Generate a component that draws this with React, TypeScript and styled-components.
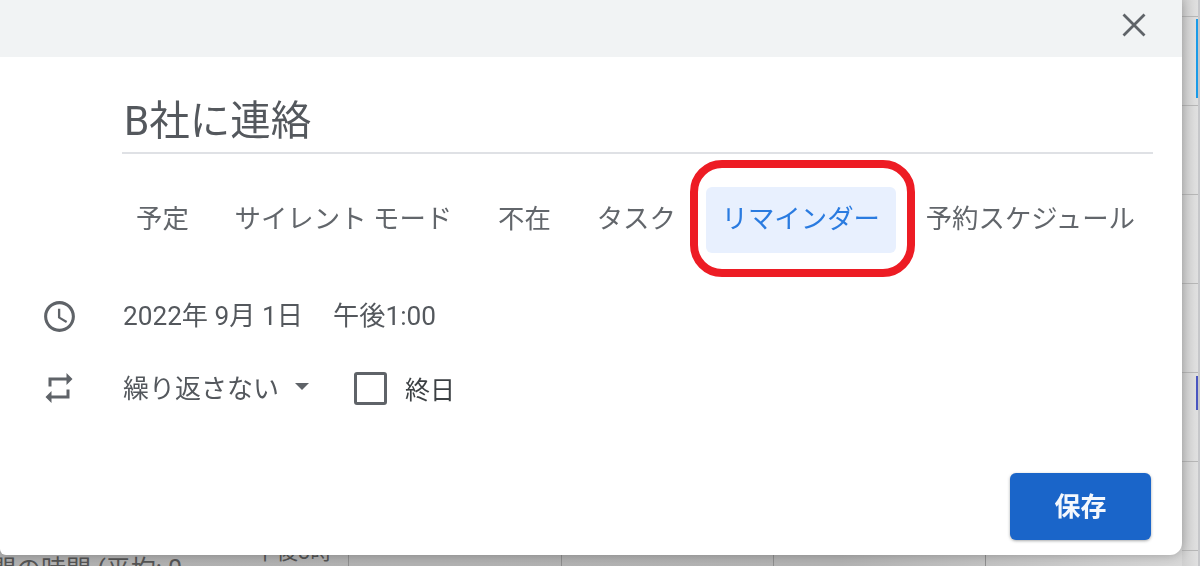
import React from "react";
import styled, { createGlobalStyle } from "styled-components";

const Global = createGlobalStyle`
  html, body { margin: 0; padding: 0; background: #dcdcdc; }
  body { font-family: Roboto, "Noto Sans CJK JP", sans-serif; }
`;

const Scene = styled.div`
  position: relative;
  width: 1200px;
  height: 566px;
  overflow: hidden;
`;

const Backdrop = styled.div`
  position: absolute;
  inset: 0;
  background: linear-gradient(90deg, #b2b2b2 0%, #b4b4b4 70%, #dadada 100%);
  filter: blur(0.6px);
`;

const Rail = styled.div`
  position: absolute;
  top: 0;
  right: 0;
  bottom: 0;
  width: 18px;
  display: flex;
  flex-direction: column;
  padding-top: 16px;
  background: linear-gradient(90deg, #cfcfcf, #e0e0e0);
  border-right: 2px solid #c6c7ca;
  box-sizing: border-box;
`;

const RailCell = styled.div`
  flex: 0 0 89px;
  box-sizing: border-box;
  border-top: 1px solid #b6b6b6;
  position: relative;
`;

const RailEvent = styled.div<{ $color: string; $top: number; $h: number }>`
  position: absolute;
  right: 0;
  width: 2px;
  top: ${(p) => p.$top}px;
  height: ${(p) => p.$h}px;
  background: ${(p) => p.$color};
`;

const BottomRow = styled.div`
  position: absolute;
  left: 0;
  right: 18px;
  bottom: 0;
  height: 11px;
  display: flex;
`;

const DayCell = styled.div<{ $w: number }>`
  flex: 0 0 ${(p) => p.$w}px;
  box-sizing: border-box;
  border-right: 1px solid #8f8f8f;
  position: relative;
  overflow: hidden;
`;

const RowLabel = styled.span`
  position: absolute;
  left: -9px;
  top: 2px;
  font-size: 25px;
  line-height: 25px;
  white-space: nowrap;
  color: #555;
`;

const TimeLabel = styled.span`
  position: absolute;
  left: 254px;
  top: -14px;
  font-size: 22px;
  line-height: 22px;
  white-space: nowrap;
  color: #555;
`;

const Dialog = styled.div`
  position: relative;
  width: 1182px;
  height: 555px;
  box-sizing: border-box;
  display: flex;
  flex-direction: column;
  background: #fff;
  border-radius: 0 0 12px 6px;
  box-shadow: 0 0 12px rgba(0, 0, 0, 0.28);
  filter: blur(0.6px);
`;

const Header = styled.div`
  flex: 0 0 57px;
  display: flex;
  justify-content: flex-end;
  align-items: flex-start;
  padding: 12px 35px 0 0;
  box-sizing: border-box;
  background: #f1f3f4;
`;

const CloseIcon = styled.svg`
  width: 26px;
  height: 26px;
  display: block;
`;

const TitleBlock = styled.div`
  margin: 0 29px 0 122px;
  height: 97px;
  box-sizing: border-box;
  border-bottom: 2px solid #dfe1e5;
  display: flex;
  align-items: flex-end;
  padding: 0 0 1px 2px;
`;

const Title = styled.div`
  font-size: 40.5px;
  line-height: 60px;
  color: #54585d;
`;

const Tabs = styled.div`
  display: flex;
  gap: 13.8px;
  margin: 33px 0 0 120px;
  height: 66px;
`;

const Tab = styled.div<{ $active?: boolean }>`
  position: relative;
  display: flex;
  align-items: center;
  padding: 0 16px 7px;
  box-sizing: border-box;
  font-size: 26.4px;
  border-radius: 6px;
  white-space: nowrap;
  color: ${(p) => (p.$active ? "#2a7be0" : "#62666b")};
  background: ${(p) => (p.$active ? "#e8f0fe" : "transparent")};
`;

const Marker = styled.div`
  position: absolute;
  left: -16px;
  right: -19px;
  top: -27px;
  bottom: -24px;
  border: 8.5px solid #ed1c24;
  border-radius: 32px;
`;

const Row = styled.div<{ $mt: number }>`
  display: grid;
  grid-template-columns: 122px auto;
  align-items: center;
  height: 40px;
  margin-top: ${(p) => p.$mt}px;
`;

const IconSlot = styled.div`
  display: flex;
  justify-content: center;
  width: 119px;
  color: #5f6368;
`;

const RepeatSlot = styled(IconSlot)`
  width: 118px;
`;

const DateText = styled.div`
  font-size: 26.2px;
  color: #54585d;
  white-space: pre;
  padding-left: 1px;
  margin-top: -5px;
`;

const TimeText = styled.span`
  margin-left: 4px;
`;

const Options = styled.div`
  display: flex;
  align-items: center;
`;

const Repeat = styled.div`
  font-size: 26px;
  color: #54585d;
  padding-left: 1px;
  margin-top: -4px;
`;

const Caret = styled.span`
  width: 0;
  height: 0;
  margin: -4px 45px 0 16px;
  border-left: 7px solid transparent;
  border-right: 7px solid transparent;
  border-top: 7px solid #5f6368;
`;

const Check = styled.span`
  width: 33px;
  height: 33px;
  box-sizing: border-box;
  border: 3px solid #5f6368;
  border-radius: 3px;
  margin-right: 18px;
`;

const AllDay = styled.span`
  font-size: 25px;
  color: #3c4043;
`;

const Footer = styled.div`
  margin-top: auto;
  display: flex;
  justify-content: flex-end;
  padding: 0 31px 15px 0;
`;

const SaveButton = styled.button`
  width: 141px;
  height: 67px;
  border: 0;
  padding: 0 0 4px;
  border-radius: 6px;
  background: #1a65c9;
  color: #f4f8fd;
  font: 700 26px Roboto, "Noto Sans CJK JP", sans-serif;
  box-shadow: 0 1px 3px rgba(60, 64, 67, 0.45);
`;

const railCells = [0, 1, 2, 3, 4, 5, 6];

export default function App() {
  return (
    <Scene>
      <Global />
      <Backdrop>
        <Rail>
          {railCells.map((i) => (
            <RailCell key={i}>
              {i === 0 && <RailEvent $color="#1a9be8" $top={2} $h={79} />}
              {i === 4 && <RailEvent $color="#4a56c0" $top={3} $h={34} />}
            </RailCell>
          ))}
        </Rail>
        <BottomRow>
          <DayCell $w={349}>
            <RowLabel>間の時間 (平均: 0</RowLabel>
            <TimeLabel>午後3時</TimeLabel>
          </DayCell>
          <DayCell $w={213} />
          <DayCell $w={212} />
          <DayCell $w={212} />
        </BottomRow>
      </Backdrop>
      <Dialog>
        <Header>
          <CloseIcon viewBox="0 0 26 26" fill="none" stroke="#5f6368" strokeWidth="2.8">
            <path d="M2.5 2.5l21 21M23.5 2.5l-21 21" />
          </CloseIcon>
        </Header>
        <TitleBlock>
          <Title>B社に連絡</Title>
        </TitleBlock>
        <Tabs>
          <Tab>予定</Tab>
          <Tab>サイレント モード</Tab>
          <Tab>不在</Tab>
          <Tab>タスク</Tab>
          <Tab $active>
            リマインダー
            <Marker />
          </Tab>
          <Tab>予約スケジュール</Tab>
        </Tabs>
        <Row $mt={43}>
          <IconSlot>
            <svg width="37" height="37" viewBox="0 0 24 24" fill="currentColor">
              <path d="M11.99 2C6.47 2 2 6.48 2 12s4.47 10 9.99 10C17.52 22 22 17.52 22 12S17.52 2 11.99 2zM12 20c-4.42 0-8-3.58-8-8s3.58-8 8-8 8 3.58 8 8-3.58 8-8 8zm.5-13H11v6l5.25 3.15.75-1.23-4.5-2.67z" />
            </svg>
          </IconSlot>
          <DateText>
            {"2022年 9月 1日　"}
            <TimeText>午後1:00</TimeText>
          </DateText>
        </Row>
        <Row $mt={32}>
          <RepeatSlot>
            <svg width="36" height="36" viewBox="0 0 24 24" fill="currentColor">
              <path d="M7 7h10v3l4-4-4-4v3H5v6h2V7zm10 10H7v-3l-4 4 4 4v-3h12v-6h-2v4z" />
            </svg>
          </RepeatSlot>
          <Options>
            <Repeat>繰り返さない</Repeat>
            <Caret />
            <Check />
            <AllDay>終日</AllDay>
          </Options>
        </Row>
        <Footer>
          <SaveButton>保存</SaveButton>
        </Footer>
      </Dialog>
    </Scene>
  );
}
